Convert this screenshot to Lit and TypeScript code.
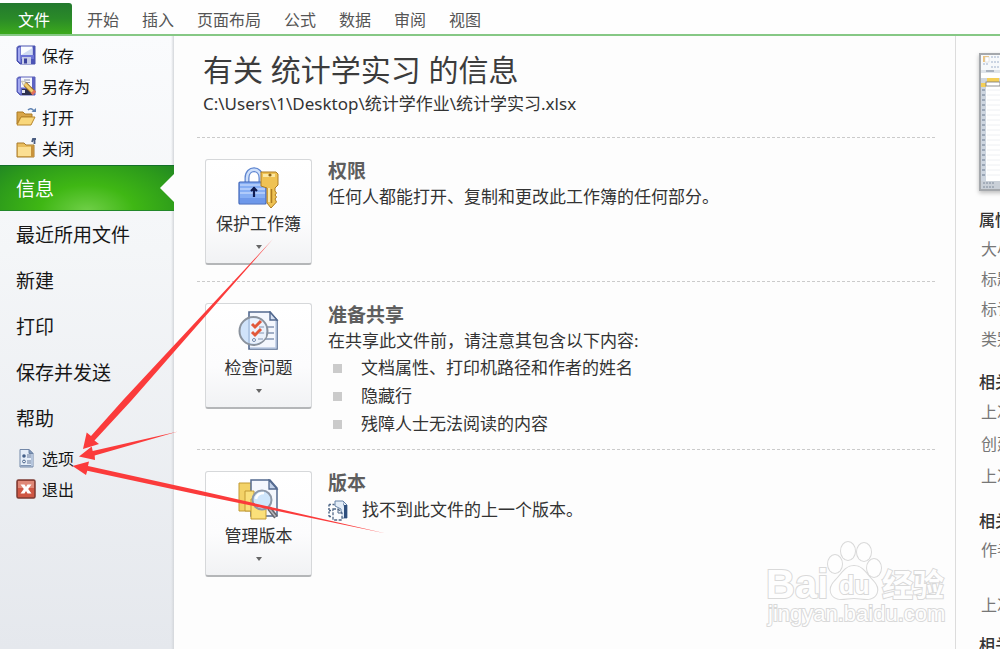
import { LitElement, html, css, svg } from "lit";
import { customElement } from "lit/decorators.js";

const ICONS: Record<string, unknown> = {
  save: svg`
    <path d="M1 2.500 2.500 1H19v18H4L1 16z" fill="#4c54b8" stroke="#4b52ae"/>
    <path d="M2 3v12.500L4.500 18V2z" fill="#a3a9f0"/>
    <path d="M4.500 10H18v4H4.500z" fill="#6c74d6"/>
    <rect x="5" y="1.500" width="11.500" height="8.500" fill="#fafcff"/>
    <path d="M5 10 16.500 3v7z" fill="#cfdaf2"/>
    <rect x="6" y="12" width="9" height="7" fill="#c6cbe6"/>
    <rect x="8" y="13.500" width="3" height="5" fill="#3a419c"/>`,
  saveAs: svg`
    <path d="M1 2.500 2.500 1H19v18H4L1 16z" fill="#5d63c4" stroke="#5a61b8"/>
    <path d="M2 3v12.500L4.500 18V2z" fill="#a3a9f0"/>
    <rect x="5" y="1.500" width="11" height="10" fill="#f6f8fd"/>
    <path d="M8 4h6M9 6.500h5" stroke="#8a8fa8"/>
    <path d="M6 13h6l5 6H6z" fill="#2e3150"/>
    <path d="M6 14h3v3H6z" fill="#e4e7f4"/>
    <path d="m9 8 9 9" stroke="#9a6c20" stroke-width="4.600"/>
    <path d="m9 8 8.500 8.500" stroke="#f2cc6c" stroke-width="3"/>
    <path d="m16.500 15.500 2 2" stroke="#e0705c" stroke-width="4.600"/>
    <path d="m5.500 5 4.500.800-3 3z" fill="#fdf3d2" stroke="#888" stroke-width=".5"/>`,
  open: svg`
    <path d="M1 5h6l2 2h7v3H5l-4 7z" fill="#d9a648" stroke="#ab7a24"/>
    <path d="M5 10h14l-4 8H1z" fill="#f9d77b" stroke="#b8862c"/>
    <path d="M12 3q3-3 6 1" fill="none" stroke="#5d81b1" stroke-width="1.500"/>
    <path d="M15.500 5H20V1z" fill="#5d81b1"/>`,
  close: svg`
    <path d="M1 5h7l2 2h8v12H1z" fill="#e9bd5e" stroke="#a87a2a"/>
    <path d="M2 9h15v9H2z" fill="#fbdf92"/>
    <path d="M15 8h3v11h-3z" fill="#c8923a"/>
    <path d="M18.500 6V2M16 4l1-3h3" fill="none" stroke="#4a5c80" stroke-width="1.800"/>`,
  options: svg`
    <path d="M4 1.500h9l4 4V19H4z" fill="#e6eef8" stroke="#7388a8"/>
    <path d="M13 1.500v4h4z" fill="#7f97bb" stroke="#6f85a6"/>
    <path d="M4.500 17h12v1.500h-12z" fill="#8195b4"/>
    <path d="M15 6h2v12h-2z" fill="#b5c5dc"/>
    <circle cx="8" cy="8" r="1.800" fill="#46618a"/>
    <circle cx="8" cy="13.500" r="1.400" fill="#fff" stroke="#46618a"/>
    <path d="M11 7h4M11 9h4M11 13h4M11 15h4" stroke="#64799b"/>`,
  exit: svg`
    <rect x="1" y="1" width="18" height="18" rx="1.500" fill="#cf5643" stroke="#7c3a32" stroke-width="1.500"/>
    <path d="M2 2h16v7H2z" fill="#e59a88" opacity=".75"/>
    <path d="M4.500 5.500h4L10 8l1.500-2.500h4L12.200 10l3.300 4.500h-4L10 12l-1.500 2.500h-4L7.800 10z" fill="#fff"/>`,
  lock: svg`
    <path d="M9 15V11C9 0 23 0 23 11v4" fill="none" stroke="#5f86d0" stroke-width="5"/>
    <path d="M9 15V11C9 0 23 0 23 11v4" fill="none" stroke="#cfe0fb" stroke-width="2.500"/>
    <rect x="1" y="15" width="27" height="22" rx="1" fill="#86aef4" stroke="#3c63b8" stroke-width="1.200"/>
    <path d="M2 18h25M2 22h25M2 26h25" stroke="#bdd4fc" stroke-width="1.600"/>
    <path d="M2 31h25v5H2z" fill="#6e98ea"/>
    <path d="M16 20v10M13 24l3-3 3 3" fill="none" stroke="#101c50" stroke-width="2.200"/>
    <path d="M23 5h15l2 2v11l-3 3v3l1.500 2-1.500 2 1.500 2-1.500 2 1.500 3-5.500 6-4-5V21l-6-2V7z" fill="#efc253" stroke="#ad7c22"/>
    <path d="M25 7h12v3H25zM30 21h2v14h-2z" fill="#fbe8a4"/>
    <circle cx="32" cy="8" r="1.600" fill="#8c641c"/>
    <path d="M33.500 22v14" stroke="#ad7c22" stroke-width="1.500"/>`,
  inspect: svg`
    <path d="M11 1h21l7 8v29H11z" fill="#f4f7fd" stroke="#53698f" stroke-width="1.600"/>
    <path d="M38 10v27H12" fill="none" stroke="#b9c9e2" stroke-width="1.500"/>
    <path d="M32 1v8h7z" fill="#d5e0f2" stroke="#53698f" stroke-width="1.400"/>
    <path d="M26 16h10M26 22h10M26 28h10" stroke="#8496b4" stroke-width="1.300"/>
    <circle cx="15.500" cy="20" r="14" fill="#c3dbf8" fill-opacity=".78" stroke="#8a929d" stroke-width="2"/>
    <path d="M12 7.500Q24 6 28 16v10q-5 8-16 6z" fill="#f2f6fd" opacity=".8"/>
    <path d="m14 13 3 3 6-6M14 21l3 3 6-6" fill="none" stroke="#e2583a" stroke-width="3"/>
    <circle cx="16" cy="29" r="1.500" fill="#fff" stroke="#7086aa"/>
    <path d="M21 16h5M21 22h5M20 28h5" stroke="#8496b4"/>`,
  versions: svg`
    <path d="M1 4h12l3 3v25H1z" fill="#f3d267" stroke="#c29a34"/>
    <path d="M13 1h19l7 8v28H13z" fill="#f4f7fd" stroke="#53698f" stroke-width="1.500"/>
    <path d="M31 1v9h8z" fill="#c3d2ea" stroke="#53698f" stroke-width="1.300"/>
    <path d="M7 12h9v20H7z" fill="#fae07c" stroke="#c29a34"/>
    <path d="M13 20h15v20H13z" fill="#fbe07a" stroke="#c29a34"/>
    <circle cx="24" cy="21" r="9.500" fill="#cfe6fb" stroke="#8d98a8" stroke-width="2"/>
    <path d="M18 20q1-6 8-6" fill="none" stroke="#fff" stroke-width="2.500"/>
    <path d="m31 29 7 9" stroke="#65656c" stroke-width="4.500"/>
    <path d="m31.500 30 6 7.500" stroke="#b6b6bd" stroke-width="1.500"/>`,
  noVersion: svg`
    <path d="M7 1h8l4 4v13h-6V9L7 6z" fill="#e3edf8" stroke="#6683a8"/>
    <path d="M15 1v4h4v13h-3V7z" fill="#2f4f7d"/>
    <path d="M1 4.500h6M1 10.500h4M1 4.500v12M1 16.500h3" fill="none" stroke="#4f6787" stroke-dasharray="2 1.500" stroke-width="1.500"/>
    <path d="M5 9h5l4 4v7H5z" fill="#fbfcfe" stroke="#4f6787" stroke-dasharray="3 1.500" stroke-width="1.300"/>
    <path d="M10 9v4h4" fill="none" stroke="#4f6787"/>`,
};

const icon = (name: string, size: number) => html`
  <svg width=${size} height=${size} viewBox="0 0 ${size} ${size}" aria-hidden="true">${ICONS[name]}</svg>`;

@customElement("file-nav")
export class FileNav extends LitElement {
  static styles = css`
    :host {
      display: block;
      box-sizing: border-box;
      padding-top: 3px;
      background: linear-gradient(to right, transparent calc(100% - 3px), #d4d7db),
        linear-gradient(#fafbfd, #f4f6f8 35%, #e5e8ed);
    }
    button {
      display: flex;
      align-items: center;
      width: 100%;
      margin: 0;
      border: 0;
      background: none;
      color: #161616;
      font: inherit;
      text-align: left;
      white-space: nowrap;
    }
    .small {
      height: 31px;
      gap: 6px;
      padding: 0 16px;
      font-size: 16px;
    }
    .large {
      height: 46px;
      padding: 0 16px;
      font-size: 19px;
    }
    .active {
      position: relative;
      margin-top: 2px;
      color: #fff;
      background: radial-gradient(ellipse 112px 62px at 50% 100%, #70cf48, #3fb714 42%, #2c9a1b 85%, #17752b 130%);
      box-shadow: inset 0 1px #14702a, inset 0 -1px #23882a;
    }
    .active::after {
      content: "";
      position: absolute;
      right: 0;
      top: 9px;
      border: 14px solid transparent;
      border-left: 0;
      border-right-color: #fdfdfd;
    }
    .group {
      padding-bottom: 1px;
    }
  `;

  private small(name: string, label: string) {
    return html`<button class="small">${icon(name, 20)}${label}</button>`;
  }

  render() {
    return html`
      ${this.small("save", "保存")} ${this.small("saveAs", "另存为")}
      ${this.small("open", "打开")} ${this.small("close", "关闭")}
      <button class="large active" aria-current="page">信息</button>
      <div class="group">
        ${["最近所用文件", "新建", "打印", "保存并发送", "帮助"].map(
          (t) => html`<button class="large">${t}</button>`
        )}
      </div>
      ${this.small("options", "选项")} ${this.small("exit", "退出")}
    `;
  }
}

@customElement("info-section")
export class InfoSection extends LitElement {
  static properties = { icon: {}, action: {}, heading: {} };
  declare icon: string;
  declare action: string;
  declare heading: string;

  static styles = css`
    :host {
      display: flex;
      align-items: flex-start;
      gap: 16px;
      padding: 20px 0 11px 8px;
      border-top: 1px dashed #cbcbcb;
    }
    .action {
      display: flex;
      flex-direction: column;
      align-items: center;
      flex: none;
      box-sizing: border-box;
      width: 107px;
      height: 106px;
      margin: 1px 0 5px;
      padding: 7px 0 0;
      border: 1px solid #d6d8da;
      border-bottom: 2px solid #b4b6b8;
      border-radius: 3px;
      background: linear-gradient(#fff, #fcfcfd 60%, #f1f2f4);
      color: #333;
      font: inherit;
      font-size: 17px;
      line-height: 32px;
      white-space: nowrap;
    }
    .caret {
      margin-top: 5px;
      border: 3px solid transparent;
      border-top: 4px solid #666;
      border-bottom: 0;
    }
    .body {
      min-width: 0;
      color: #333;
      font-size: 17px;
      line-height: 26px;
    }
    h2 {
      margin: 0;
      color: #5e5e5e;
      font-size: 19px;
      line-height: 26px;
      font-weight: 700;
    }
  `;

  render() {
    return html`
      <button class="action">
        ${icon(this.icon, 41)}
        <span>${this.action}</span>
        <span class="caret"></span>
      </button>
      <div class="body">
        <h2>${this.heading}</h2>
        <slot></slot>
      </div>
    `;
  }
}

@customElement("app-root")
export class AppRoot extends LitElement {
  static styles = css`
    :host {
      display: flex;
      flex-direction: column;
      position: relative;
      height: 100vh;
      overflow: hidden;
      background: #fdfdfd;
      color: #333;
      font-family: "Noto Sans", "Noto Sans CJK SC", sans-serif;
    }
    .tabs {
      display: flex;
      align-items: stretch;
      flex: none;
      box-sizing: border-box;
      height: 36px;
      padding-top: 3px;
      border-bottom: 2px solid #86c885;
      background: #fefefe;
    }
    .tab {
      padding: 0;
      margin-right: 23px;
      border: 0;
      background: none;
      color: #555;
      font: inherit;
      font-size: 16px;
      white-space: nowrap;
    }
    .file {
      width: 72px;
      margin-right: 15px;
      padding-right: 4px;
      border-radius: 0 3px 0 0;
      background: linear-gradient(#23792e, #2a8a28 50%, #3caa1c);
      color: #fff;
    }
    .backstage {
      display: grid;
      flex: 1;
      min-height: 0;
      grid-template-columns: 174px minmax(782px, 1fr) 300px;
      grid-template-rows: minmax(0, 1fr);
    }
    .info {
      position: relative;
      padding: 12px 20px 0 23px;
      border-right: 1px solid #dcdcdc;
    }
    h1 {
      margin: 0;
      padding-left: 6px;
      color: #3c3c3c;
      font-size: 30px;
      line-height: 44px;
      font-weight: 400;
    }
    .path {
      margin: 0 0 22px;
      padding-left: 6px;
      font-size: 17px;
      line-height: 23px;
    }
    p {
      margin: 0;
    }
    ul {
      margin: 0;
      padding: 0;
      list-style: none;
    }
    .notes li {
      display: flex;
      align-items: center;
      gap: 19px;
      padding-left: 5px;
      line-height: 28px;
    }
    .notes li::before {
      content: "";
      width: 9px;
      height: 9px;
      background: #cbcbcb;
    }
    .none {
      display: flex;
      align-items: center;
      gap: 13px;
      line-height: 28px;
    }
    .details {
      padding: 17px 0 0 23px;
      font-size: 16px;
      white-space: nowrap;
    }
    .preview {
      display: block;
      margin-bottom: 15px;
      filter: drop-shadow(0 2px 2px #bbb);
    }
    h3 {
      margin: 0;
      color: #333;
      font-size: 16px;
      line-height: 28px;
      font-weight: 500;
    }
    .details ul {
      margin-bottom: 14px;
      padding-left: 2px;
      color: #777;
      line-height: 30px;
    }
    .details .roomy {
      margin-bottom: 15px;
      line-height: 32px;
    }
    .details .people {
      display: grid;
      gap: 25px;
      margin-bottom: 11px;
    }
    .watermark {
      position: absolute;
      right: 3px;
      bottom: 19px;
      font-family: "Liberation Sans", "Noto Sans CJK SC", sans-serif;
    }
    .outline {
      fill: #fefefe;
      stroke: #d9d9d9;
      stroke-width: 2px;
      paint-order: stroke;
    }
    .bold {
      font-weight: 700;
    }
    .arrows {
      position: absolute;
      left: 0;
      top: 0;
      pointer-events: none;
    }
  `;

  private sheetPreview() {
    const rows = Array.from({ length: 18 }, (_, i) => 37 + i * 5);
    return html`<svg class="preview" width="200" height="138" viewBox="0 0 200 138" aria-hidden="true">
      <rect x="1" y="1" width="198" height="136" fill="#fff" stroke="#a5a8ac" stroke-width="2" />
      <path d="M2 2h196v16H2z" fill="#f7f9fb" />
      <path d="M2 17h196v3H2z" fill="#dfe4ea" />
      <rect x="4" y="3" width="6" height="6" fill="#efc47c" />
      <rect x="6" y="4" width="4" height="5" fill="#fff" stroke="#ccc" stroke-width=".5" />
      <path d="M12 4h8M12 9h8M12 14h8M4 11h5" stroke="#9fb0ca" stroke-dasharray="2 1" />
      <path d="M7 18h8" stroke="#aab3bf" stroke-width="2" />
      <path d="M2 25h196v5H2z" fill="#cfd6df" />
      <path d="M2 30h5v98H2z" fill="#cdd5df" />
      <path d="M8 25h12v4H8zM2 30h5v4H2z" fill="#f4cf58" />
      ${rows.map((y) => svg`<path d="M3 ${y}h3" stroke="#9aa6b6" stroke-width="2"/><path d="M8 ${y}h190" stroke="#eef0f3" stroke-width="1"/>`)}
      <rect x="7" y="29" width="14" height="4" fill="#fff" stroke="#777" stroke-width=".8" />
      <path d="M2 128h196v8H2z" fill="#c9cfd7" />
      <path d="M4 130h12M4 134h12" stroke="#7e8a9b" stroke-dasharray="2 1" />
    </svg>`;
  }

  render() {
    return html`
      <nav class="tabs">
        <button class="tab file">文件</button>
        ${["开始", "插入", "页面布局", "公式", "数据", "审阅", "视图"].map(
          (t) => html`<button class="tab">${t}</button>`
        )}
      </nav>
      <div class="backstage">
        <file-nav></file-nav>
        <main class="info">
          <h1>有关 统计学实习 的信息</h1>
          <p class="path">C:\\Users\\1\\Desktop\\统计学作业\\统计学实习.xlsx</p>
          <info-section icon="lock" action="保护工作簿" heading="权限">
            <p>任何人都能打开、复制和更改此工作簿的任何部分。</p>
          </info-section>
          <info-section icon="inspect" action="检查问题" heading="准备共享">
            <p>在共享此文件前，请注意其包含以下内容:</p>
            <ul class="notes">
              <li>文档属性、打印机路径和作者的姓名</li>
              <li>隐藏行</li>
              <li>残障人士无法阅读的内容</li>
            </ul>
          </info-section>
          <info-section icon="versions" action="管理版本" heading="版本">
            <p class="none">${icon("noVersion", 21)}找不到此文件的上一个版本。</p>
          </info-section>
          <svg class="watermark" width="190" height="90" viewBox="0 0 190 90">
            <text class="outline bold" x="4" y="58" font-size="40">Bai</text>
            <g class="outline">
              <ellipse cx="73" cy="24" rx="7" ry="9" />
              <ellipse cx="86" cy="11" rx="7" ry="9" />
              <ellipse cx="102" cy="12" rx="7" ry="9" />
              <ellipse cx="112" cy="28" rx="7" ry="9" />
              <path d="M92 26c9 0 12 8 19 15 8 8 4 18-6 18-5 0-8-1-13-1s-8 1-13 1c-10 0-14-10-6-18 7-7 10-15 19-15z" />
            </g>
            <text class="outline bold" x="77" y="54" font-size="25">du</text>
            <text class="outline bold" x="120" y="56" font-size="31">经验</text>
            <text class="outline" x="6" y="81" font-size="22">jingyan.baidu.com</text>
          </svg>
        </main>
        <aside class="details">
          ${this.sheetPreview()}
          <h3>属性</h3>
          <ul>
            <li>大小</li>
            <li>标题</li>
            <li>标记</li>
            <li>类别</li>
          </ul>
          <h3>相关日期</h3>
          <ul class="roomy">
            <li>上次修改时间</li>
            <li>创建时间</li>
            <li>上次打印时间</li>
          </ul>
          <h3>相关人员</h3>
          <ul class="people">
            <li>作者</li>
            <li>上次修改者</li>
          </ul>
          <h3>相关文档</h3>
        </aside>
      </div>
      <svg class="arrows" width="400" height="560" viewBox="0 0 400 560" fill="#fb3b3b" aria-hidden="true">
        <path d="M83 449 86.700 432.500 91 436 124 399 273 239 131 401 94.500 440.500 99 444z" />
        <path d="M79 456.500 91.700 446.500 92.700 451 178 431.500 94.700 455.500 95 460z" />
        <path d="M72.500 466 89 461.500 88 466 200 490.700 386 533.500 200 495 87.300 470.700 86 475z" />
      </svg>
    `;
  }
}
